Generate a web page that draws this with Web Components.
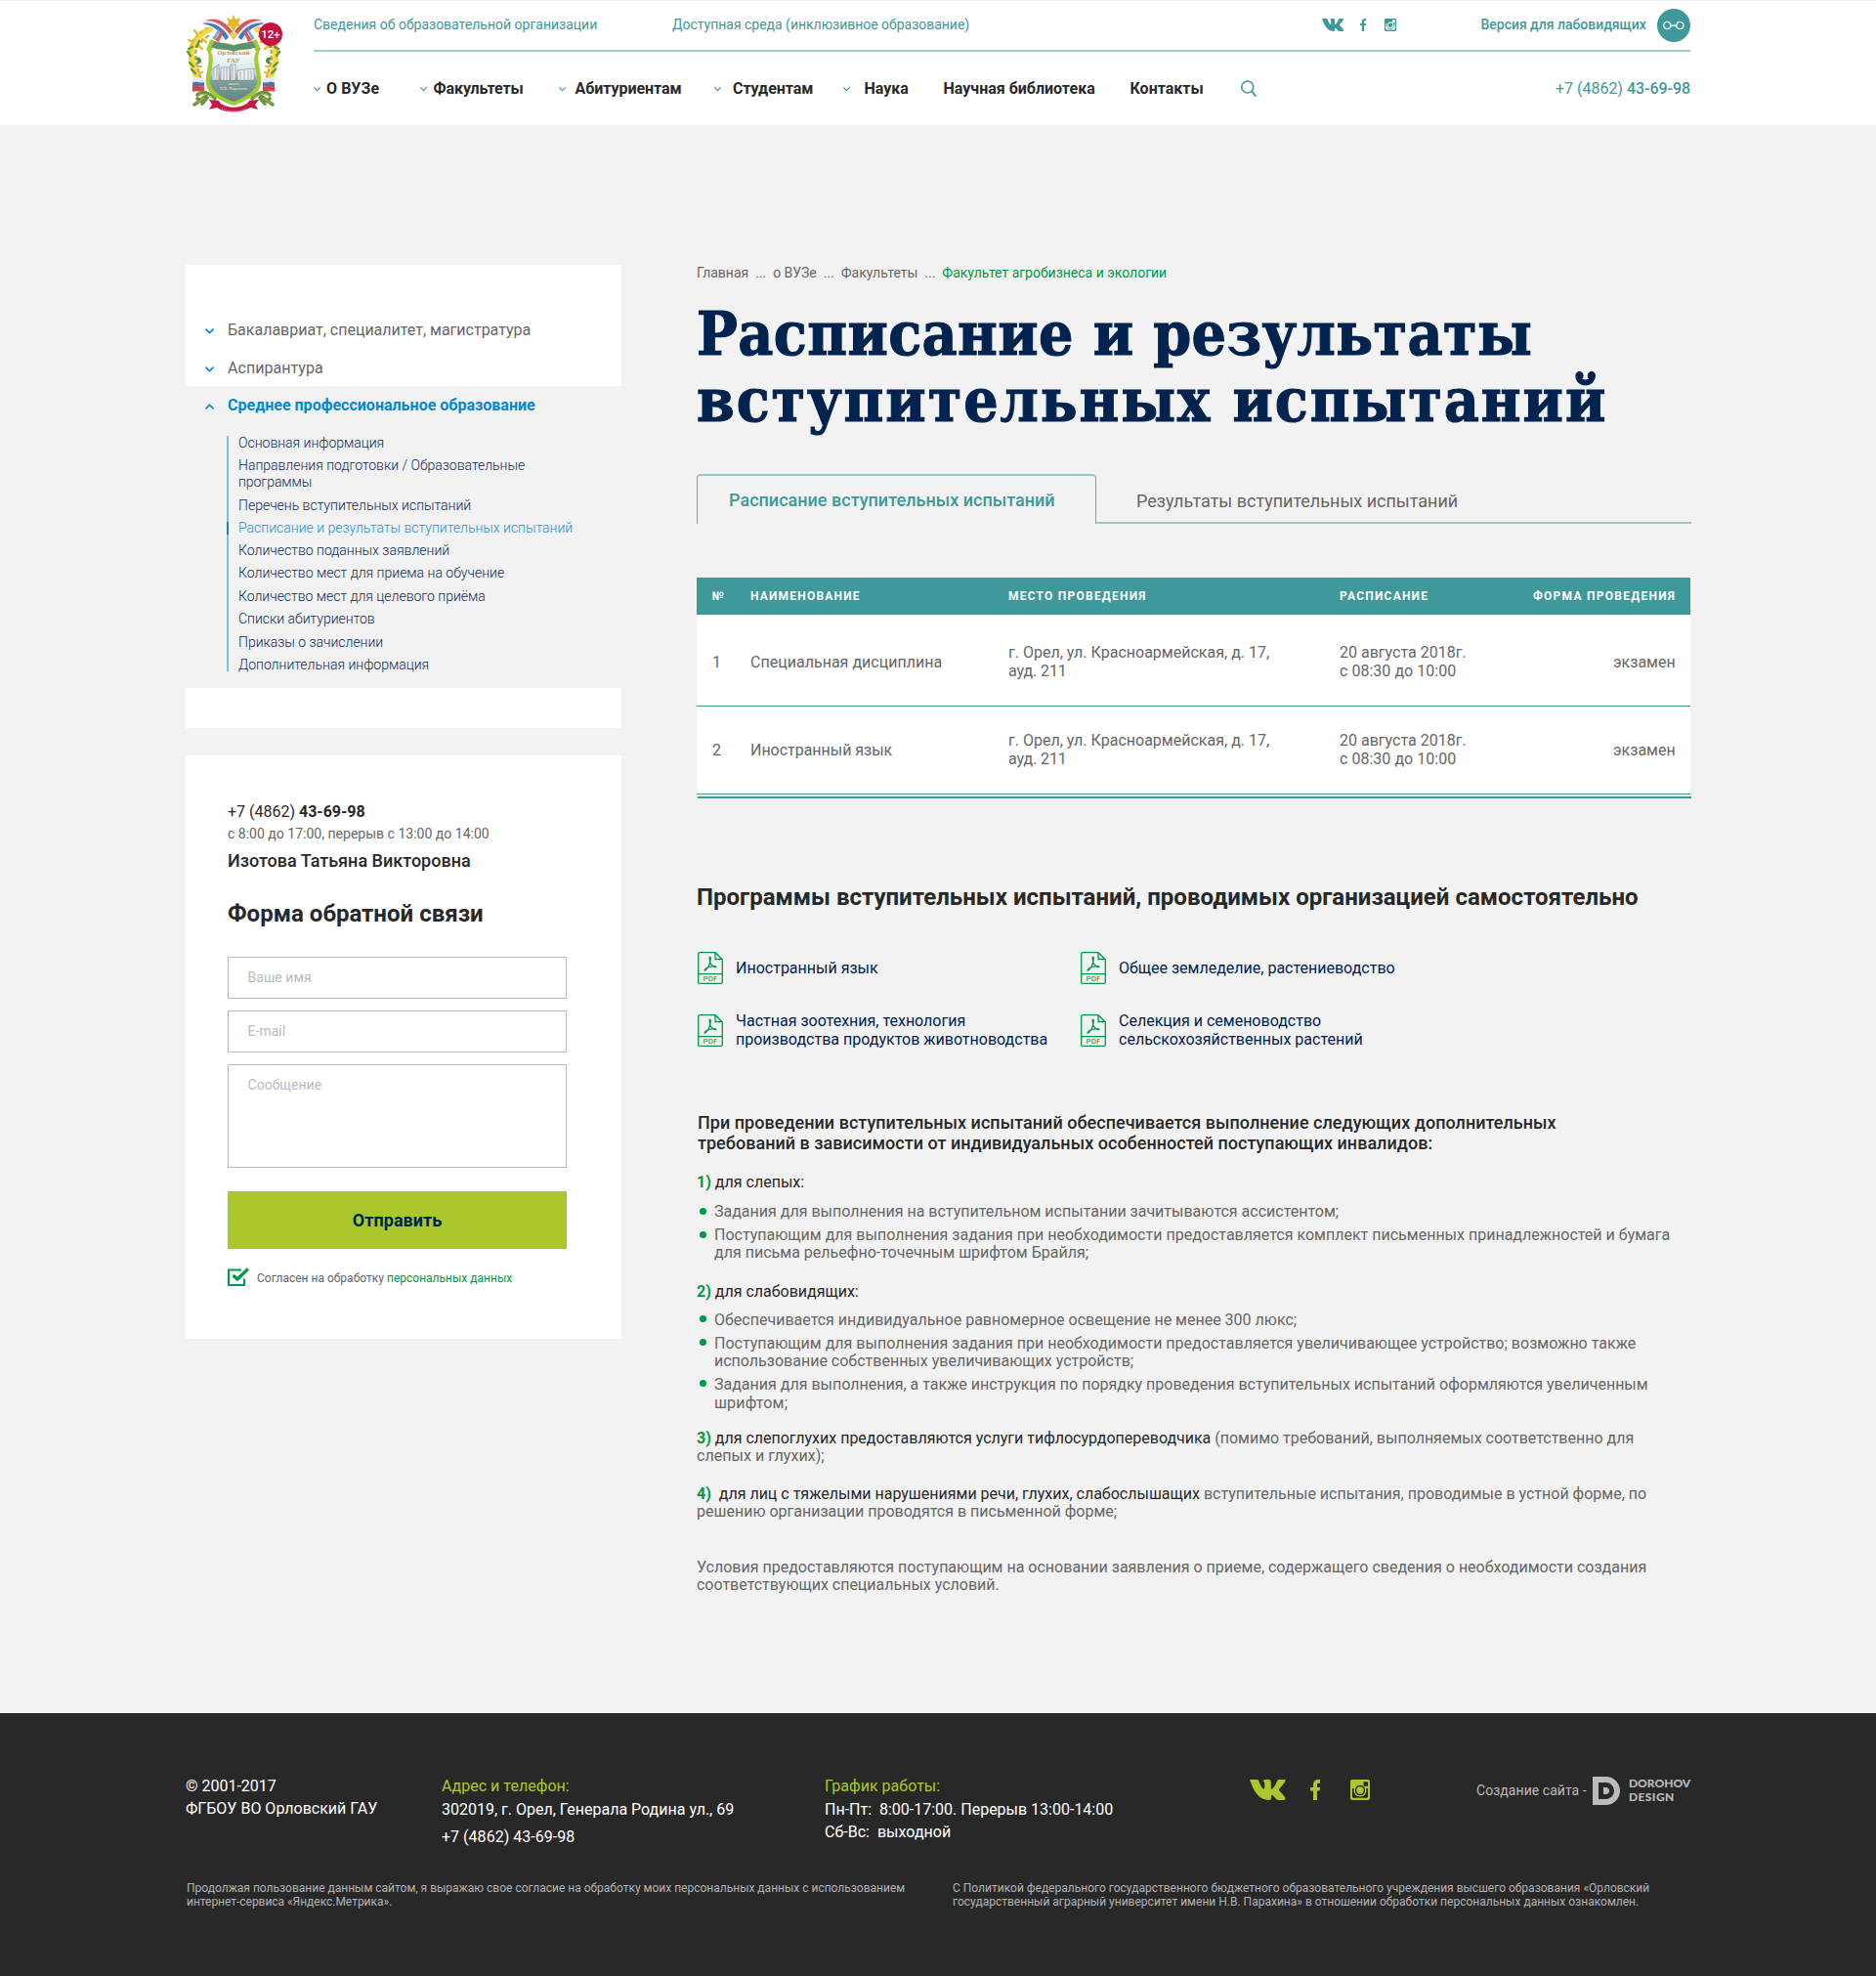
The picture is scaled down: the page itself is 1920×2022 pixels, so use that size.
<!DOCTYPE html>
<html lang="ru">
<head>
<meta charset="utf-8">
<title>Расписание и результаты вступительных испытаний</title>
<style>
html,body{margin:0;padding:0}
body{background:#f2f2f2;font-family:Roboto,"Liberation Sans",sans-serif;font-size:16px;color:#666}
</style>
</head>
<body>
<page-shell></page-shell>
<script>
const define = (name, css, html) => customElements.define(name, class extends HTMLElement {
  connectedCallback() {
    if (this.shadowRoot) return;
    this.attachShadow({mode: 'open'}).innerHTML = `<style>${css}</style>${html}`;
  }
});

/* One line of text: h is the distance from the box top to the baseline, w the set width. */
customElements.define('tx-line', class extends HTMLElement {
  connectedCallback() {
    if (this.shadowRoot) return;
    const root = this.attachShadow({mode: 'open'});
    root.innerHTML = `<style>
      :host{display:flex;align-items:flex-end;box-sizing:border-box;white-space:nowrap;flex:none}
      span{display:block;flex:none;line-height:var(--base,.683)}
    </style><span><slot></slot></span>`;
    const span = root.querySelector('span');
    this.style.height = this.getAttribute('h') + 'px';
    const w = parseFloat(this.getAttribute('w'));
    if (w) {
      this.style.width = w + 'px';
      const n = this.textContent.length;
      span.style.letterSpacing = ((w + .2 - span.getBoundingClientRect().width) / n).toFixed(3) + 'px';
    }
  }
});

const VK = 'M0 0h7.6c1 0 1.300.5 1.700 1.400C10.500 4.500 12.500 8.500 14 9.500c1 .5 1.300-.6 1.300-2V4c0-1.800-.8-2.300-2-2.600.6-.9 2-1.400 4.200-1.400h1.800c2 0 2.500.9 2.500 2.500v6c0 1.300.8 1.600 1.700.8C25.200 7.600 27 4 28.200 1.300 28.600.3 29 0 30 0h5.500c1 0 1.300.6.9 1.500C35.400 4 31.500 8 30.300 9.600c-.5.7-.5 1.200.1 1.900 1.500 1.600 4.800 4.800 5.900 7 .7 1.500 0 2.500-1.500 2.500h-5.700c-2 0-4.500-4.800-6.200-5.200-.8 0-.8 1-.8 2.500 0 1.800-.6 2.700-2.300 2.700C9.500 21 4 12 0 0z';
define('social-links', `
  :host{display:flex;flex:none;align-items:flex-start;color:var(--c)}
  svg{display:block;fill:currentColor;flex:none}
  .vk{width:var(--vw);height:var(--ih)} .fb{width:var(--fw);height:var(--ih);margin-left:var(--g1)} .ig{width:var(--iw);height:var(--ih);margin-left:var(--g2)}
`, `
  <svg class="vk" viewBox="0 0 36.500 21" preserveAspectRatio="none"><path d="${VK}"/></svg>
  <svg class="fb" viewBox="0 0 10 21" preserveAspectRatio="none"><path d="M3 21V11.500H0V8h3V5.500C3 2 5 0 8 0h2v3.700H8.500C7.300 3.700 7 4.300 7 5.500V8h3l-.4 3.500H7V21z"/></svg>
  <svg class="ig" viewBox="0 0 20 21" preserveAspectRatio="none"><path fill-rule="evenodd" d="M2 0h16a2 2 0 0 1 2 2v17a2 2 0 0 1-2 2H2a2 2 0 0 1-2-2V2a2 2 0 0 1 2-2zM13.500 2.200v4.500H18V2.200zM2 9v8.500c0 .8.4 1.200 1.200 1.200h13.600c.8 0 1.200-.4 1.200-1.200V9h-1.700a6.600 6.600 0 1 1-12.600 0z"/><circle cx="10" cy="11" r="5.200" fill="var(--bg)"/><circle cx="10" cy="11" r="3.700" /></svg>
`);

define('nav-chevron', `
  :host{display:block;flex:none;width:7px;height:4px;margin-top:36px}
  svg{display:block;overflow:visible}
`, `<svg width="7" height="4" viewBox="0 0 7 4" fill="none" stroke="#3f9899" stroke-width="1.100"><path d="M.3.3 3.500 3.600 6.700.3"/></svg>`);

define('uni-crest', `
  :host{display:block;position:relative;flex:none;width:99px;height:100px;margin-top:14px}
  svg{display:block}
  .badge{position:absolute;left:75px;top:8px;width:24px;height:24px;border-radius:50%;background:#c5123f;color:#fff;font:500 11.500px/24px Roboto,sans-serif;text-align:center}
`, `
  <svg width="99" height="100" viewBox="0 0 99 100">
    <defs><linearGradient id="sky" x1="0" y1="0" x2="0" y2="1"><stop offset="0" stop-color="#fff"/><stop offset=".45" stop-color="#d5e6ee"/><stop offset=".62" stop-color="#7f9c9c"/><stop offset="1" stop-color="#5f8580"/></linearGradient>
    <g id="half">
      <g fill="none" stroke-linecap="round">
        <path d="M25 15C16 18 8 26 6 38c-1 8 1 14 3 20 1 4 3 8 4 12" stroke="#f0d84f" stroke-width="6" stroke-dasharray="3 4.500"/>
        <path d="M22 14C12 19 5 28 4 38" stroke="#e6c235" stroke-width="3" stroke-dasharray="2 4"/>
        <path d="M23 22C14 28 10 34 10 42c0 8 3 14 5 22" stroke="#d9ab22" stroke-width="2.500" stroke-dasharray="2.500 4"/>
        <path d="M12 20l-3-4M8 28l-5-2M17 25l4 3M13 32l4 3M11 46l4 1M12 53l4 0M14 60l3-1" stroke="#e3b92a" stroke-width="2.200"/>
        <path d="M2 38l3 4M4 49l4 4M6 56l4 4M14 27l-3 6M3 35l4-2" stroke="#5f9a38" stroke-width="2.400"/>
        <path d="M12 45c3 0 3 3 1 4" stroke="#3f8f4a" stroke-width="3"/>
      </g>
      <path d="M17 8c9-6 21-2 32 11-4 2-7 5-11 8-3-9-11-14-21-19z" fill="#e6eaf2"/>
      <path d="M17 9c10-2 21 3 27 14l-3 3C35 16 28 11 17 9z" fill="#3e79bb"/>
      <path d="M20 6c10-4 20 0 28 11l-3 3C38 10 30 6 20 6z" fill="#d9565a"/>
      <path d="M36 15c-1 4-3 7-6 11l4 2 4-9z" fill="#d9565a"/><path d="M33 14c-1 4-3 7-6 10l3 2 5-9z" fill="#7fa6d3"/>
      <path d="M7 65c4-3 8 1 12-1v5c-4 2-8-1-12 1z" fill="#e6ebf4"/><path d="M7 70c4-3 8 1 12-1v4c-4 2-8-1-12 1z" fill="#4a73b8"/><path d="M7 74c4-3 8 1 12-1v5c-4 2-8-1-12 1z" fill="#d8434c"/>
      <path d="M12 82c6-5 12-2 18 4M9 92c4-2 8-6 12-9M17 91l5-6M12 86l4 2" stroke="#6a9440" stroke-width="3.600" fill="none" stroke-linecap="round"/><path d="M13 83c6-3 11-1 16 3M11 91l8-6" stroke="#a9c46c" stroke-width="1" fill="none"/>
    </g></defs>
    <use href="#half"/><use href="#half" transform="translate(98 0) scale(-1 1)"/>
    <path d="M49 0l2 5 5-2-2 6 3 2-5 1-3 6-3-6-5-1 3-2-2-6 5 2z" fill="#e4b92a"/><path d="M45 20l4 6 4-6z" fill="#e4c240"/><circle cx="49" cy="20" r="2.500" fill="#efd24c"/>
    <path d="M26 25c8 5 16 3 23 6 7-3 15-1 23-6 3 4 3 8 5 10-7 10 2 24 0 36-2 12-17 18-28 22-11-4-26-10-28-22-2-12 7-26 0-36 2-2 2-6 5-10z" fill="#a5c935"/>
    <path d="M30 27c7 3 13 2 19 5 6-3 12-2 19-5l4 6c-7 4-16 1-23 5-7-4-16-1-23-5z" fill="#5e8f78"/>
    <path d="M28 34c7 3 15 1 21 4 6-3 14-1 21-4l2 4c-5 10 2 22 1 32-2 10-14 15-24 19-10-4-22-9-24-19-1-10 6-22 1-32z" fill="url(#sky)"/>
    <path d="M27 56l7-5v16h-7zM36 54h9v13h-9zM46 51h5v16h-5zM53 57l17-2v12H53z" fill="#eef0ee" stroke="#7b8990" stroke-width=".7"/><path d="M29 55v11M32 53v13M39 55v11M42 55v11M48 52v14M56 58v8M60 57v9M64 57v9M67 57v9" stroke="#8b989c" stroke-width=".8"/>
    <text x="49" y="41" font-family="Liberation Serif,serif" font-size="7" font-weight="700" fill="#b89a4a" text-anchor="middle" textLength="33" lengthAdjust="spacingAndGlyphs">Орловский</text>
    <text x="49" y="49" font-family="Liberation Serif,serif" font-size="7" font-weight="700" fill="#b89a4a" text-anchor="middle">ГАУ</text>
    <text x="49" y="72" font-family="Liberation Serif,serif" font-size="4" fill="#f3e9b4" text-anchor="middle">имени</text>
    <text x="49" y="77" font-family="Liberation Serif,serif" font-size="4.500" fill="#f3e9b4" text-anchor="middle">Н.В. Парахина</text>
    <path d="M24 87l10 1c3 9 27 9 31 0l10-1-4 5 3 5-8-2c-9 6-26 6-34 0l-8 2 3-5z" fill="#c41840"/><path d="M37 96c8 4 18 4 25 0" fill="none" stroke="#f3b8c4" stroke-width="1" stroke-dasharray="1 1"/>
  </svg>
  <div class="badge">12+</div>
`);

define('site-header', `
  :host{display:block;background:#fff;border-top:1px solid #f0f0f0;height:127px}
  .in{width:1540px;margin:0 auto;display:flex;gap:32px}
  .col{width:1409px}
  .top{display:flex;align-items:flex-start;height:50px;border-bottom:2px solid #9fcccc;font-size:14px;color:#3f9899}
  .nav{display:flex;align-items:flex-start;font-weight:700;color:#282828}
  social-links{--c:#3f9899;--bg:#fff;--ih:13px;--vw:22px;--fw:6px;--iw:12px;--g1:17px;--g2:19px;margin:18px 0 0 361px}
  .eye{flex:none;margin:8px 0 0 11.500px}
  .find{flex:none;margin:29px 0 0 39px}
  .tel{color:#3f9899;font-weight:400;margin-left:306px} b{font-weight:500}
`, `
  <div class="in"><uni-crest></uni-crest>
  <div class="col">
    <div class="top">
      <tx-line h="29.600" w="290">Сведения об образовательной организации</tx-line>
      <tx-line h="29.600" w="304" style="margin-left:77px">Доступная среда (инклюзивное образование)</tx-line>
      <social-links></social-links>
      <tx-line h="29.600" w="169" style="margin-left:86.500px;font-weight:500">Версия для лабовидящих</tx-line>
      <svg class="eye" width="34" height="34" viewBox="0 0 34 34"><circle cx="17" cy="17" r="17" fill="#3f9899"/><g fill="none" stroke="#fff" stroke-width="1.400"><circle cx="10.300" cy="17" r="3.600"/><circle cx="23.300" cy="17" r="3.600"/><path d="M14 17.200h5.600"/></g></svg>
    </div>
    <div class="nav">
      <nav-chevron></nav-chevron><tx-line h="43.500" w="54" style="margin-left:6px">О ВУЗе</tx-line>
      <nav-chevron style="margin-left:42px"></nav-chevron><tx-line h="43.500" w="92" style="margin-left:6.500px">Факультеты</tx-line>
      <nav-chevron style="margin-left:36.500px"></nav-chevron><tx-line h="43.500" w="109" style="margin-left:9.500px">Абитуриентам</tx-line>
      <nav-chevron style="margin-left:33.500px"></nav-chevron><tx-line h="43.500" w="82" style="margin-left:12px">Студентам</tx-line>
      <nav-chevron style="margin-left:31px"></nav-chevron><tx-line h="43.500" w="45" style="margin-left:14.500px">Наука</tx-line>
      <tx-line h="43.500" w="155" style="margin-left:36px">Научная библиотека</tx-line>
      <tx-line h="43.500" w="75" style="margin-left:36px">Контакты</tx-line>
      <svg class="find" width="16" height="17" viewBox="0 0 16 17" fill="none" stroke="#3f9899" stroke-width="1.600" style="margin-left:38.500px"><circle cx="6.800" cy="7" r="6"/><path d="M11 11.500l4.500 5" stroke-width="1.900"/></svg>
      <tx-line class="tel" h="43.500" w="138">+7 (4862) <b>43-69-98</b></tx-line>
    </div>
  </div></div>
`);

define('side-row', `
  :host{display:flex;align-items:flex-end;padding-left:20px}
  svg{flex:none;margin:0 14px 2px 0;overflow:visible}
  :host([open]) svg{transform:scaleY(-1)}
`, `<svg width="9" height="6" viewBox="0 0 9 6" fill="none" stroke="#0288d1" stroke-width="1.600"><path d="M.4.6 4.500 4.600 8.600.6"/></svg><slot></slot>`);

define('side-nav', `
  :host{display:block}
  .w1{background:#fff;height:124px}
  .open{height:309px;box-sizing:border-box}
  .act{font-weight:700;color:#0288d1}
  .list{margin:25.500px 0 0 42px;height:241px;border-left:2px solid #7fbde2;padding-left:10px;font-size:14px;font-weight:300;color:#0a2a58;box-sizing:border-box}
  .cur{color:#1b93d5;position:relative}
  .cur::before{content:"";position:absolute;left:-12px;bottom:-1px;width:2px;height:13px;background:#0288d1}
  .w2{background:#fff;height:41px}
`, `
  <div class="w1"><side-row><tx-line h="72.600" w="310">Бакалавриат, специалитет, магистратура</tx-line></side-row>
  <side-row><tx-line h="39" w="97.500">Аспирантура</tx-line></side-row></div>
  <div class="open"><side-row open><tx-line class="act" h="25.500" w="314.500">Среднее профессиональное образование</tx-line></side-row>
  <div class="list">
    <tx-line h="12.650" w="149">Основная информация</tx-line>
    <tx-line h="23" w="293">Направления подготовки / Образовательные</tx-line>
    <tx-line h="17" w="75">программы</tx-line>
    <tx-line h="23.500" w="238">Перечень вступительных испытаний</tx-line>
    <tx-line h="23.500" w="342" class="cur">Расписание и результаты вступительных испытаний</tx-line>
    <tx-line h="23" w="216">Количество поданных заявлений</tx-line>
    <tx-line h="23" w="272">Количество мест для приема на обучение</tx-line>
    <tx-line h="24" w="252.500">Количество мест для целевого приёма</tx-line>
    <tx-line h="23" w="139.500">Списки абитуриентов</tx-line>
    <tx-line h="24" w="148">Приказы о зачислении</tx-line>
    <tx-line h="23" w="195">Дополнительная информация</tx-line>
  </div></div>
  <div class="w2"></div>
`);

define('form-field', `
  :host{display:block;box-sizing:border-box;width:347px;height:43px;border:1px solid #bbb;padding-left:19.500px;font-size:14px;color:#bbb}
`, `<slot></slot>`);

define('contact-card', `
  :host{display:block;background:#fff;height:597px;padding-left:43px;box-sizing:border-box;margin-top:28px}
  .blk{color:#282828} b{font-weight:700}
  .fields{display:flex;flex-direction:column;gap:12px;margin-top:36px}
  .area{height:106px}
  .btn{width:347px;height:59px;background:#aac72c;display:flex;justify-content:center;margin-top:24px;color:#00234f;font-weight:700;font-size:18px}
  .agree{display:flex;align-items:flex-start;margin-top:19px;font-size:12px}
  .agree svg{flex:none;margin-right:8px}
  i{font-style:normal;color:#009846}
`, `
  <tx-line class="blk" h="63.600" w="140.500">+7 (4862) <b>43-69-98</b></tx-line>
  <tx-line h="22" w="267.500" style="font-size:14px">с 8:00 до 17:00, перерыв с 13:00 до 14:00</tx-line>
  <tx-line class="blk" h="28.400" w="248.500" style="font-size:18px;font-weight:500">Изотова Татьяна Викторовна</tx-line>
  <tx-line class="blk" h="56" w="261.500" style="font-size:24px;font-weight:700">Форма обратной связи</tx-line>
  <div class="fields">
    <form-field><tx-line h="25.600" w="65">Ваше имя</tx-line></form-field>
    <form-field><tx-line h="25.600" w="38.500">E-mail</tx-line></form-field>
    <form-field class="area"><tx-line h="25.600" w="75.500">Сообщение</tx-line></form-field>
  </div>
  <div class="btn"><tx-line h="36" w="91.500">Отправить</tx-line></div>
  <div class="agree"><svg width="22" height="19" viewBox="0 0 22 19" fill="none" stroke="#009846"><path d="M14 2.500H1V18h16v-6.500" stroke-width="2"/><path d="M5.500 8l4.500 4L20.800 1.500" stroke-width="3.300"/></svg><tx-line h="15" w="261">Согласен на обработку <i>персональных данных</i></tx-line></div>
`);

define('page-tabs', `
  :host{display:flex;height:51px;width:1018px}
  .on{box-sizing:border-box;width:408.500px;border:1px solid #5fabac;border-top:2px solid #95c8c9;border-bottom:0;border-radius:4px 4px 0 0;padding-left:32px;color:#3f9899;font-weight:500;font-size:18px}
  .off{box-sizing:border-box;flex:1;border-bottom:2px solid #95c8c9;border-bottom-left-radius:3px;margin-left:-1px;padding-left:42.500px;font-size:18px}
`, `<div class="on"><tx-line h="31" w="333.500">Расписание вступительных испытаний</tx-line></div>
<div class="off"><tx-line h="34" w="329">Результаты вступительных испытаний</tx-line></div>`);

define('exam-row', `
  :host{display:flex;background:#fff;border-bottom:1px solid #3f9899;width:1017px;box-sizing:border-box}
  .n{padding-left:16px;width:39px}.a{width:264px}.b{width:339px}.c{width:280px}
`, `<div class="n"><slot name="n"></slot></div><div class="a"><slot name="a"></slot></div><div class="b"><slot name="b"></slot></div><div class="c"><slot name="c"></slot></div><slot name="d"></slot>`);

define('exam-table', `
  :host{display:block;margin-top:55px;width:1018px}
  .head{display:flex;background:#3f9899;height:38px;width:1017px;color:#fff;font-size:12px;font-weight:700}
  .end{height:2px;background:#3f9899;margin:2px 0 0 1px}
  .r1{height:94px}.r2{height:90px}
`, `
  <div class="head"><tx-line h="23" w="12" style="margin-left:15.500px">№</tx-line><tx-line h="23" w="112.500" style="margin-left:27.500px">НАИМЕНОВАНИЕ</tx-line><tx-line h="23" w="141.500" style="margin-left:151.500px">МЕСТО ПРОВЕДЕНИЯ</tx-line><tx-line h="23" w="91" style="margin-left:197.500px">РАСПИСАНИЕ</tx-line><tx-line h="23" w="146" style="margin-left:107px">ФОРМА ПРОВЕДЕНИЯ</tx-line></div>
  <exam-row class="r1"><tx-line slot="n" h="54.500">1</tx-line><tx-line slot="a" h="54.500" w="196">Специальная дисциплина</tx-line>
    <tx-line slot="b" h="44.500" w="267">г. Орел, ул. Красноармейская, д. 17,</tx-line><tx-line slot="b" h="19.100" w="59.500">ауд. 211</tx-line>
    <tx-line slot="c" h="44.500" w="129.500">20 августа 2018г.</tx-line><tx-line slot="c" h="19.100" w="119">с 08:30 до 10:00</tx-line><tx-line slot="d" h="54.500" w="63.500">экзамен</tx-line></exam-row>
  <exam-row class="r2"><tx-line slot="n" h="50.500">2</tx-line><tx-line slot="a" h="50.500" w="145">Иностранный язык</tx-line>
    <tx-line slot="b" h="41" w="267">г. Орел, ул. Красноармейская, д. 17,</tx-line><tx-line slot="b" h="18.500" w="59.500">ауд. 211</tx-line>
    <tx-line slot="c" h="41" w="129.500">20 августа 2018г.</tx-line><tx-line slot="c" h="18.500" w="119">с 08:30 до 10:00</tx-line><tx-line slot="d" h="50.500" w="63.500">экзамен</tx-line></exam-row>
  <div class="end"></div>
`);

define('pdf-link', `
  :host{display:flex;align-items:flex-start;color:#00234f}
  svg{flex:none;margin-right:13px;display:block}
`, `<svg width="26" height="33" viewBox="0 0 26 33" fill="none" stroke="#009846" stroke-width="1.300"><path d="M18 .7H2A1.300 1.300 0 0 0 .7 2v29A1.300 1.300 0 0 0 2 32.300h22a1.300 1.300 0 0 0 1.300-1.300V8z"/><path d="M18 .7V7.500h7.300M.7 22.600h24.600"/><path d="M12.600 5.200c1.600.4.300 3.800.1 5.400-.4 3.300-4.100 8.400-5.300 8.600-1.400-.3 1.200-3 5.300-4 3-.8 6.500-1 6.200.2-.5 1.400-4.500-1-6-4.400-.7-1.800-1.200-5.600-.3-5.800z" stroke-width="1.200"/><text x="13" y="30.300" font-family="Roboto,sans-serif" font-size="8" font-weight="400" fill="#009846" stroke="none" text-anchor="middle" textLength="15">PDF</text></svg><div><slot></slot></div>`);

define('bullet-item', `
  :host{display:flex;align-items:flex-start}
  .dot{flex:none;width:7px;height:7px;border-radius:50%;background:#009846;margin:var(--dot,14px) 8.500px 0 2.500px}
`, `<div class="dot"></div><div><slot></slot></div>`);

define('main-article', `
  :host{display:block;width:1018px}
  .h1{font-family:"Roboto Slab","DejaVu Serif Condensed","DejaVu Serif",serif;font-stretch:condensed;font-weight:700;color:#00234f;font-size:62px;--base:.703;-webkit-text-stroke:1.100px #00234f}
  .blk{color:#282828} b{font-weight:700;color:#009846} .g{color:#009846} .k{color:#282828;font-weight:400} .m{font-weight:500}
  page-tabs{margin-top:53px}
  .pdf{display:grid;grid-template-columns:392px 1fr;grid-template-rows:64px 33px;margin:48px 0 0 1px}
`, `
  <tx-line h="13.500" w="481" style="font-size:14px">Главная&nbsp; ...&nbsp; о ВУЗе&nbsp; ...&nbsp; Факультеты&nbsp; ...&nbsp; <span class="g">Факультет агробизнеса и экологии</span></tx-line>
  <tx-line class="h1" h="79.500" w="855">Расписание и результаты</tx-line>
  <tx-line class="h1" h="68" w="932">вступительных испытаний</tx-line>
  <page-tabs></page-tabs>
  <exam-table></exam-table>
  <tx-line class="blk" h="109" w="963.500" style="font-size:24px;font-weight:700">Программы вступительных испытаний, проводимых организацией самостоятельно</tx-line>
  <div class="pdf">
    <pdf-link><tx-line h="22.600" w="145.500">Иностранный язык</tx-line></pdf-link>
    <pdf-link><tx-line h="22.600" w="282.500">Общее земледелие, растениеводство</tx-line></pdf-link>
    <pdf-link><tx-line h="12.500" w="235">Частная зоотехния, технология</tx-line><tx-line h="19.100" w="319">производства продуктов животноводства</tx-line></pdf-link>
    <pdf-link><tx-line h="12.500" w="207">Селекция и семеноводство</tx-line><tx-line h="19.100" w="249.500">сельскохозяйственных растений</tx-line></pdf-link>
  </div>
  <tx-line class="blk m" h="84" w="878.500" style="font-size:18px;margin-left:1px">При проведении вступительных испытаний обеспечивается выполнение следующих дополнительных</tx-line>
  <tx-line class="blk m" h="21" w="752" style="font-size:18px;margin-left:1px">требований в зависимости от индивидуальных особенностей поступающих инвалидов:</tx-line>
  <tx-line class="blk" h="39.500" w="110"><b>1)</b> для слепых:</tx-line>
  <bullet-item style="--dot:20px"><tx-line h="30.100" w="639">Задания для выполнения на вступительном испытании зачитываются ассистентом;</tx-line></bullet-item>
  <bullet-item><tx-line h="24" w="978">Поступающим для выполнения задания при необходимости предоставляется комплект письменных принадлежностей и бумага</tx-line><tx-line h="17.900" w="383">для письма рельефно-точечным шрифтом Брайля;</tx-line></bullet-item>
  <tx-line class="blk" h="40" w="165.500"><b>2)</b> для слабовидящих:</tx-line>
  <bullet-item style="--dot:19px"><tx-line h="29" w="596">Обеспечивается индивидуальное равномерное освещение не менее 300 люкс;</tx-line></bullet-item>
  <bullet-item><tx-line h="24" w="943">Поступающим для выполнения задания при необходимости предоставляется увеличивающее устройство; возможно также</tx-line><tx-line h="18" w="429">использование собственных увеличивающих устройств;</tx-line></bullet-item>
  <bullet-item><tx-line h="24" w="955.500">Задания для выполнения, а также инструкция по порядку проведения вступительных испытаний оформляются увеличенным</tx-line><tx-line h="19.100" w="75">шрифтом;</tx-line></bullet-item>
  <tx-line h="35.900" w="959"><b>3)</b> <span class="k">для слепоглухих предоставляются услуги тифлосурдопереводчика</span> (помимо требований, выполняемых соответственно для</tx-line>
  <tx-line h="18.500" w="130.500">слепых и глухих);</tx-line>
  <tx-line h="38.500" w="972"><b>4)</b>&nbsp; <span class="k">для лиц с тяжелыми нарушениями речи, глухих, слабослышащих</span> вступительные испытания, проводимые в устной форме, по</tx-line>
  <tx-line h="18.500" w="430">решению организации проводятся в письменной форме;</tx-line>
  <tx-line h="56.500" w="972">Условия предоставляются поступающим на основании заявления о приеме, содержащего сведения о необходимости создания</tx-line>
  <tx-line h="18.500" w="309.500">соответствующих специальных условий.</tx-line>
`);

define('site-footer', `
  :host{display:block;background:#282828;height:269px;color:#fff}
  .in{width:1540px;margin:0 auto}
  .row{display:flex;align-items:flex-start;height:150px}
  .g{color:#aac72c}
  .c1{width:262px}.c2{width:392px}.c3{width:435px}
  social-links{--c:#aac72c;--bg:#282828;--ih:21px;--vw:36.500px;--fw:10px;--iw:20px;--g1:25.500px;--g2:31px;margin-top:68px}
  .made{margin-left:109px;font-size:14px;color:#bbb}
  .row svg{flex:none;margin:65px 9.500px 0 6px}
  .dd{font-family:Lato,sans-serif;font-weight:900;font-size:12px;color:#bbb;--base:.77}
  .small{display:flex;font-size:12px;color:#b4b4b4}
  .s1{width:785px;padding-left:1px;box-sizing:border-box}
`, `
  <div class="in"><div class="row">
    <div class="c1"><tx-line h="80.600" w="92.500">© 2001-2017</tx-line><tx-line h="23" w="196">ФГБОУ ВО Орловский ГАУ</tx-line></div>
    <div class="c2"><tx-line class="g" h="80.600" w="130.500">Адрес и телефон:</tx-line><tx-line h="24" w="299">302019, г. Орел, Генерала Родина ул., 69</tx-line><tx-line h="28" w="136">+7 (4862) 43-69-98</tx-line></div>
    <div class="c3"><tx-line class="g" h="80.600" w="118">График работы:</tx-line><tx-line h="24" w="295">Пн-Пт:&nbsp; 8:00-17:00. Перерыв 13:00-14:00</tx-line><tx-line h="23" w="129">Сб-Вс:&nbsp; выходной</tx-line></div>
    <social-links></social-links>
    <tx-line class="made" h="84.600" w="112.500">Создание сайта -</tx-line>
    <svg width="28" height="29" viewBox="0 0 28 29"><path fill="#bbb" fill-rule="evenodd" d="M0 0h13.500a14.500 14.500 0 0 1 0 29H0zM6 6v17h7.500a8.500 8.500 0 0 0 0-17zM11 11h2.500a3.500 3.500 0 0 1 0 7H11z"/></svg>
    <div class="dd"><tx-line h="76.500" w="63">DOROHOV</tx-line><tx-line h="14" w="46.500">DESIGN</tx-line></div>
  </div>
  <div class="small"><div class="s1"><tx-line h="33" w="735">Продолжая пользование данным сайтом, я выражаю свое согласие на обработку моих персональных данных с использованием</tx-line><tx-line h="14" w="210">интернет-сервиса «Яндекс.Метрика».</tx-line></div>
  <div><tx-line h="33" w="713">С Политикой федерального государственного бюджетного образовательного учреждения высшего образования «Орловский</tx-line><tx-line h="14" w="702">государственный аграрный университет имени Н.В. Парахина» в отношении обработки персональных данных ознакомлен.</tx-line></div></div></div>
`);

define('page-shell', `
  :host{display:block;width:1920px;height:2022px;overflow:hidden}
  .body{width:1540px;margin:0 auto;height:1625px;display:flex;gap:77px;padding-top:143px;box-sizing:border-box}
  side-nav,contact-card{width:446px}
`, `<site-header></site-header><div class="body"><div><side-nav></side-nav><contact-card></contact-card></div><main-article></main-article></div><site-footer></site-footer>`);
</script>
</body>
</html>
